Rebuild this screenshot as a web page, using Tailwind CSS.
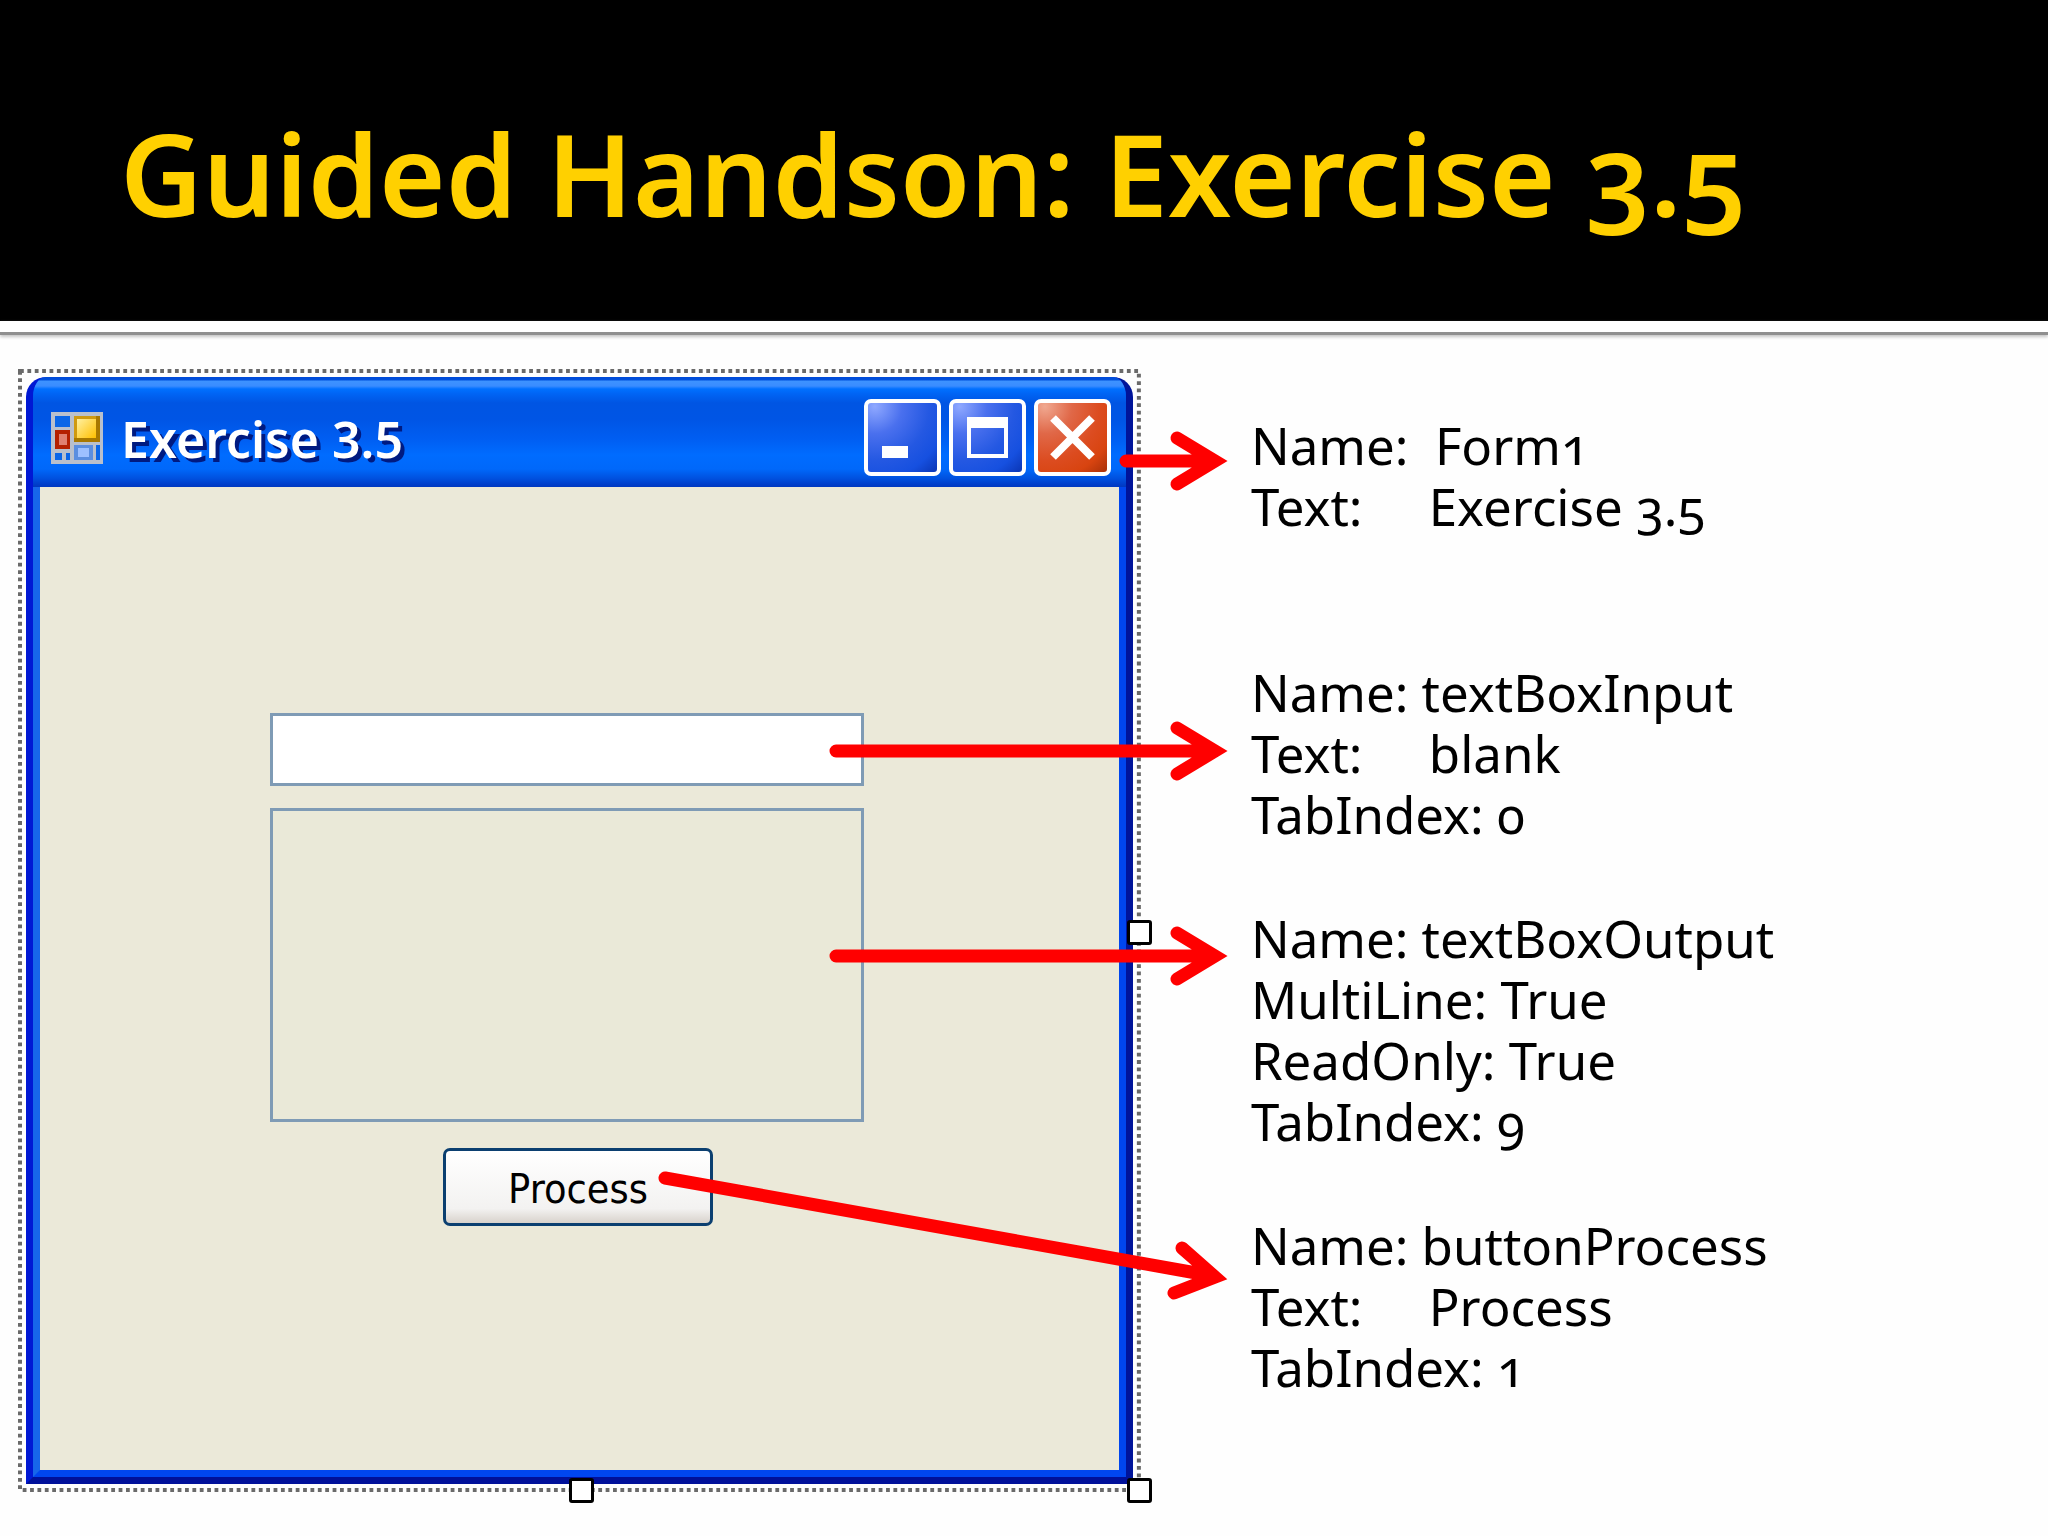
<!DOCTYPE html>
<html lang="en">
<head>
<meta charset="utf-8">
<meta name="viewport" content="width=device-width, initial-scale=1">
<title>Guided Handson: Exercise 3.5</title>
<script src="https://cdn.jsdelivr.net/npm/@tailwindcss/browser@4"></script>
</head>
<body class="min-h-screen bg-[#fefefe] font-['Noto_Sans','Open_Sans',sans-serif] text-black">
  <header>
    <div class="flex h-[321px] items-center bg-black pt-6 pl-[120px]">
      <h1 class="text-[114px] leading-none font-semibold whitespace-nowrap text-[#ffd000] oldstyle-nums">Guided Handson: Exercise 3.5</h1>
    </div>
    <div class="h-[14px] border-b-3 border-[#8f8f8f] bg-white shadow-[0_2px_3px_#c4c4c4]"></div>
  </header>

  <main class="relative flex items-start pb-[44px]">
    <!-- Form designer -->
    <section class="w-[56%] shrink-0 pt-[34px] pr-1.5 pl-[18px]">
      <div class="relative h-[1123px] p-2">
        <svg class="absolute inset-0 h-full w-full" viewBox="0 0 1123 1123" preserveAspectRatio="none" aria-hidden="true">
          <rect x="2" y="2" width="1119" height="1119" fill="none" stroke="#6a6a6a" stroke-width="4" stroke-dasharray="3.8 3.58"/>
        </svg>

        <div class="relative flex h-full flex-col overflow-hidden rounded-t-[20px] border-x-7 border-b-7 border-r-[#00149a] border-b-[#00109a] border-l-[#0018d4] bg-[#0046ee]">
          <div class="-mx-[7px] flex h-[110px] shrink-0 items-center bg-[linear-gradient(to_bottom,#004ad8_0px,#0050dc_3px,#3d93ff_4px,#3a8cff_9px,#0070ff_12px,#0064f4_17px,#0055e3_26px,#0055e5_42px,#005ef2_62px,#006cff_78px,#0068fa_92px,#0052e0_101px,#003fcb_107px,#0038c0_110px)] pt-[22px] pr-[22px] pb-[11px] pl-[25px]">
            <svg class="size-[52px] shrink-0" viewBox="0 0 52 52" aria-hidden="true">
              <defs>
                <linearGradient id="gold" x1="0" y1="0" x2="1" y2="1"><stop offset="0" stop-color="#fff0a0"/><stop offset="1" stop-color="#ffbf00"/></linearGradient>
              </defs>
              <rect width="52" height="52" fill="#b9c0cc"/>
              <rect x="4" y="4" width="15" height="11" fill="#0a66e8"/>
              <rect x="4" y="18" width="15" height="19" fill="#b52000"/>
              <rect x="8" y="22" width="8" height="11" fill="#e08070"/>
              <rect x="4" y="41" width="7" height="7" fill="#0a66e8"/>
              <rect x="15" y="41" width="4" height="7" fill="#0a66e8"/>
              <rect x="23" y="4" width="26" height="26" fill="#a87800"/>
              <rect x="23" y="4" width="22" height="22" fill="#cf9a10"/>
              <rect x="26" y="7" width="19" height="19" fill="url(#gold)"/>
              <rect x="23" y="33" width="19" height="15" fill="#5a8ee0"/>
              <rect x="27" y="36" width="11" height="9" fill="#9dc0ff"/>
              <rect x="45" y="33" width="4" height="15" fill="#0a66e8"/>
            </svg>
            <h2 class="ml-[18px] pt-0.5 text-[50px] leading-none font-semibold whitespace-nowrap text-white [text-shadow:4px_4px_0_#001a80]">Exercise 3.5</h2>
            <div class="ml-auto flex gap-2">
              <button type="button" aria-label="Minimize" class="size-[77px] rounded-[7px] border-4 border-white bg-[radial-gradient(circle_at_10%_5%,#8fa8ff_0%,#4a70ee_30%,#2458e2_60%,#1650e0_80%,#0a35b4_100%)]">
                <svg class="size-full" viewBox="0 0 69 69" aria-hidden="true"><rect x="14" y="43" width="26" height="12" fill="#fff"/></svg>
              </button>
              <button type="button" aria-label="Maximize" class="size-[77px] rounded-[7px] border-4 border-white bg-[radial-gradient(circle_at_10%_5%,#8fa8ff_0%,#4a70ee_30%,#2458e2_60%,#1650e0_80%,#0a35b4_100%)]">
                <svg class="size-full" viewBox="0 0 69 69" aria-hidden="true"><path fill="#fff" fill-rule="evenodd" d="M14 14h41v41H14zM18 25v26h33V25z"/></svg>
              </button>
              <button type="button" aria-label="Close" class="size-[77px] rounded-[7px] border-4 border-white bg-[radial-gradient(circle_at_10%_5%,#f0a890_0%,#e06848_30%,#dc4c20_60%,#d84410_80%,#a83008_100%)]">
                <svg class="size-full" viewBox="0 0 69 69" aria-hidden="true"><path fill="none" stroke="#fff" stroke-width="8" d="M15 15 54 54M54 15 15 54"/></svg>
              </button>
            </div>
          </div>

          <form class="flex min-h-0 flex-1 flex-col border-x-7 border-b-7 border-r-[#0046ee] border-b-[#0046f0] border-l-[#1766ea] bg-[#ebe9d9] pt-[226px] pr-[255px] pl-[230px]" onsubmit="return false">
            <input type="text" aria-label="textBoxInput" class="block h-[73px] w-full shrink-0 border-3 border-[#7f9bb5] bg-white px-3 text-[41px] outline-none">
            <textarea readonly aria-label="textBoxOutput" class="mt-[22px] block h-[314px] w-full shrink-0 resize-none border-3 border-[#7f9bb5] bg-[#eae9d8] px-3 text-[41px] outline-none"></textarea>
            <button type="submit" class="mt-[26px] ml-[173px] h-[78px] w-[270px] shrink-0 rounded-[7px] border-3 border-[#0b3f70] bg-[linear-gradient(to_bottom,#ffffff,#f3f2f1_80%,#d8d2cc)] pt-1 font-['DejaVu_Sans_Condensed','DejaVu_Sans',sans-serif] text-[41px] leading-none">Process</button>
          </form>
        </div>

        <!-- Resize handles -->
        <span class="absolute top-[551px] -right-[11px] size-[25px] rounded-[3px] border-3 border-black bg-white"></span>
        <span class="absolute -right-[11px] -bottom-[11px] size-[25px] rounded-[3px] border-3 border-black bg-white"></span>
        <span class="absolute -bottom-[11px] left-1/2 -ml-[10px] size-[25px] rounded-[3px] border-3 border-black bg-white"></span>
      </div>
    </section>

    <!-- Property notes -->
    <section class="min-w-0 flex-1 pt-[80px] pl-[104px] text-[51px] leading-[61px] oldstyle-nums [&_p]:whitespace-pre">
      <div class="mb-[125px]">
        <p>Name:  Form1</p>
        <p>Text:     Exercise 3.5</p>
      </div>
      <div class="mb-[63px]">
        <p>Name: textBoxInput</p>
        <p>Text:     blank</p>
        <p>TabIndex: 0</p>
      </div>
      <div class="mb-[63px]">
        <p>Name: textBoxOutput</p>
        <p>MultiLine: True</p>
        <p>ReadOnly: True</p>
        <p>TabIndex: 9</p>
      </div>
      <div>
        <p>Name: buttonProcess</p>
        <p>Text:     Process</p>
        <p>TabIndex: 1</p>
      </div>
    </section>

    <!-- Callout arrows -->
    <svg class="pointer-events-none absolute inset-0 h-full w-full" viewBox="0 335 2048 1201" preserveAspectRatio="none" fill="none" stroke="#ff0000" stroke-width="13" stroke-linecap="round" stroke-linejoin="miter" aria-hidden="true">
      <path d="M1126 461H1214M1177 438 1215 461 1177 484"/>
      <path d="M836 751H1214M1177 728 1215 751 1177 774"/>
      <path d="M836 956H1214M1177 933 1215 956 1177 979"/>
      <path d="M665 1178 1213 1276M1182 1248 1215 1277 1174 1293"/>
    </svg>
  </main>
</body>
</html>
